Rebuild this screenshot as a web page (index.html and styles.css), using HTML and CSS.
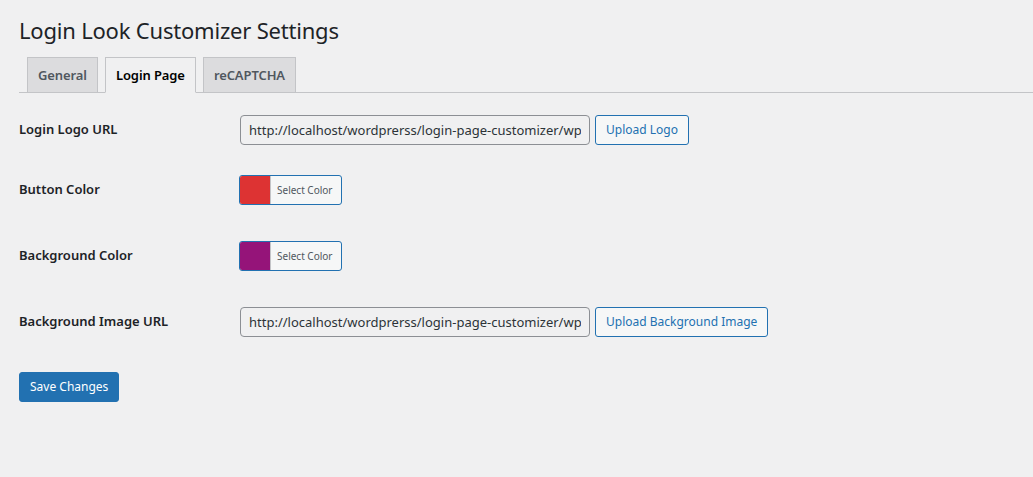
FILE: index.html
```html
<!DOCTYPE html>
<html lang="en">
<head>
<meta charset="utf-8">
<title>Login Look Customizer Settings</title>
<link rel="stylesheet" href="styles.css">
</head>
<body>
<div class="wrap">
  <h1 class="page-title">Login Look Customizer Settings</h1>
  <nav class="nav-tab-wrapper">
    <a class="nav-tab">General</a>
    <a class="nav-tab nav-tab-active">Login Page</a>
    <a class="nav-tab">reCAPTCHA</a>
  </nav>
  <form class="settings">
    <div class="row row-short">
      <div class="label">Login Logo URL</div>
      <div class="field">
        <input class="text-input" type="text" value="http://localhost/wordprerss/login-page-customizer/wp-content/uploads/logo.png" readonly>
        <button type="button" class="button">Upload Logo</button>
      </div>
    </div>
    <div class="row row-tall">
      <div class="label">Button Color</div>
      <div class="field">
        <button type="button" class="color-result"><span class="swatch swatch-red"></span><span class="color-text">Select Color</span></button>
      </div>
    </div>
    <div class="row row-tall">
      <div class="label">Background Color</div>
      <div class="field">
        <button type="button" class="color-result"><span class="swatch swatch-purple"></span><span class="color-text">Select Color</span></button>
      </div>
    </div>
    <div class="row row-short">
      <div class="label">Background Image URL</div>
      <div class="field">
        <input class="text-input" type="text" value="http://localhost/wordprerss/login-page-customizer/wp-content/uploads/bg.jpg" readonly>
        <button type="button" class="button">Upload Background Image</button>
      </div>
    </div>
    <div class="submit">
      <button type="button" class="button-primary">Save Changes</button>
    </div>
  </form>
</div>
</body>
</html>
```

FILE: styles.css
```css
html, body {
  margin: 0;
  padding: 0;
  background: #f0f0f1;
}
body {
  font-family: "Noto Sans", "Open Sans", sans-serif;
  color: #1d2327;
  font-size: 13px;
}
.wrap {
  padding: 0 0 0 19px;
}
.page-title {
  margin: 0;
  padding: 15px 0 0 0;
  font-size: 22px;
  font-weight: 400;
  letter-spacing: -0.2px;
  line-height: 30px;
  color: #1d2327;
}
.nav-tab-wrapper {
  display: flex;
  margin-top: 12px;
  padding-left: 8px;
  border-bottom: 1px solid #c3c4c7;
  height: 35px;
}
.nav-tab {
  display: block;
  box-sizing: border-box;
  height: 36px;
  margin-right: 7px;
  padding: 5px 10px;
  border: 1px solid #c3c4c7;
  background: #dcdcde;
  color: #50575e;
  font-size: 13px;
  font-weight: 600;
  line-height: 24px;
  letter-spacing: -0.1px;
  white-space: nowrap;
}
.nav-tab-active {
  background: #f0f0f1;
  border-bottom-color: #f0f0f1;
  color: #000;
}
.settings {
  padding-top: 7px;
}
.row {
  display: flex;
  box-sizing: border-box;
}
.row-short { height: 60px; }
.row-tall { height: 66px; }
.label {
  width: 221px;
  flex: none;
  padding-top: 20px;
  font-size: 13px;
  font-weight: 600;
  line-height: 18px;
  color: #1d2327;
}
.field {
  display: flex;
  align-items: flex-start;
  padding-top: 15px;
}
.text-input {
  box-sizing: border-box;
  width: 350px;
  height: 30px;
  margin: 0;
  padding: 0 8px;
  border: 1px solid #8c8f94;
  border-radius: 4px;
  background: #f0f0f1;
  color: #2c3338;
  font-family: inherit;
  font-size: 13px;
  line-height: 28px;
  outline: none;
}
.button {
  box-sizing: border-box;
  height: 30px;
  margin: 0 0 0 5px;
  padding: 0 10px;
  border: 1px solid #2271b1;
  border-radius: 3px;
  background: #f6f7f7;
  color: #2271b1;
  font-family: inherit;
  font-size: 12px;
  line-height: 28px;
  white-space: nowrap;
}
.color-result {
  display: flex;
  box-sizing: border-box;
  height: 30px;
  width: 103px;
  margin: 0 0 0 -1px;
  padding: 0;
  border: 1px solid #2271b1;
  border-radius: 3px;
  background: #f6f7f7;
  overflow: hidden;
  font-family: inherit;
}
.swatch {
  display: block;
  width: 30px;
  height: 100%;
  flex: none;
  border-right: 1px solid #c3c4c7;
}
.swatch-red { background: #dd3333; }
.swatch-purple { background: #951479; }
.color-text {
  display: block;
  padding: 0 6px;
  font-size: 10px;
  line-height: 28px;
  color: #50575e;
  white-space: nowrap;
}
.submit {
  padding-top: 20px;
}
.button-primary {
  box-sizing: border-box;
  height: 30px;
  margin: 0;
  padding: 0 10px;
  border: 1px solid #2271b1;
  border-radius: 3px;
  background: #2271b1;
  color: #fff;
  font-family: inherit;
  font-size: 12px;
  line-height: 28px;
}
```
